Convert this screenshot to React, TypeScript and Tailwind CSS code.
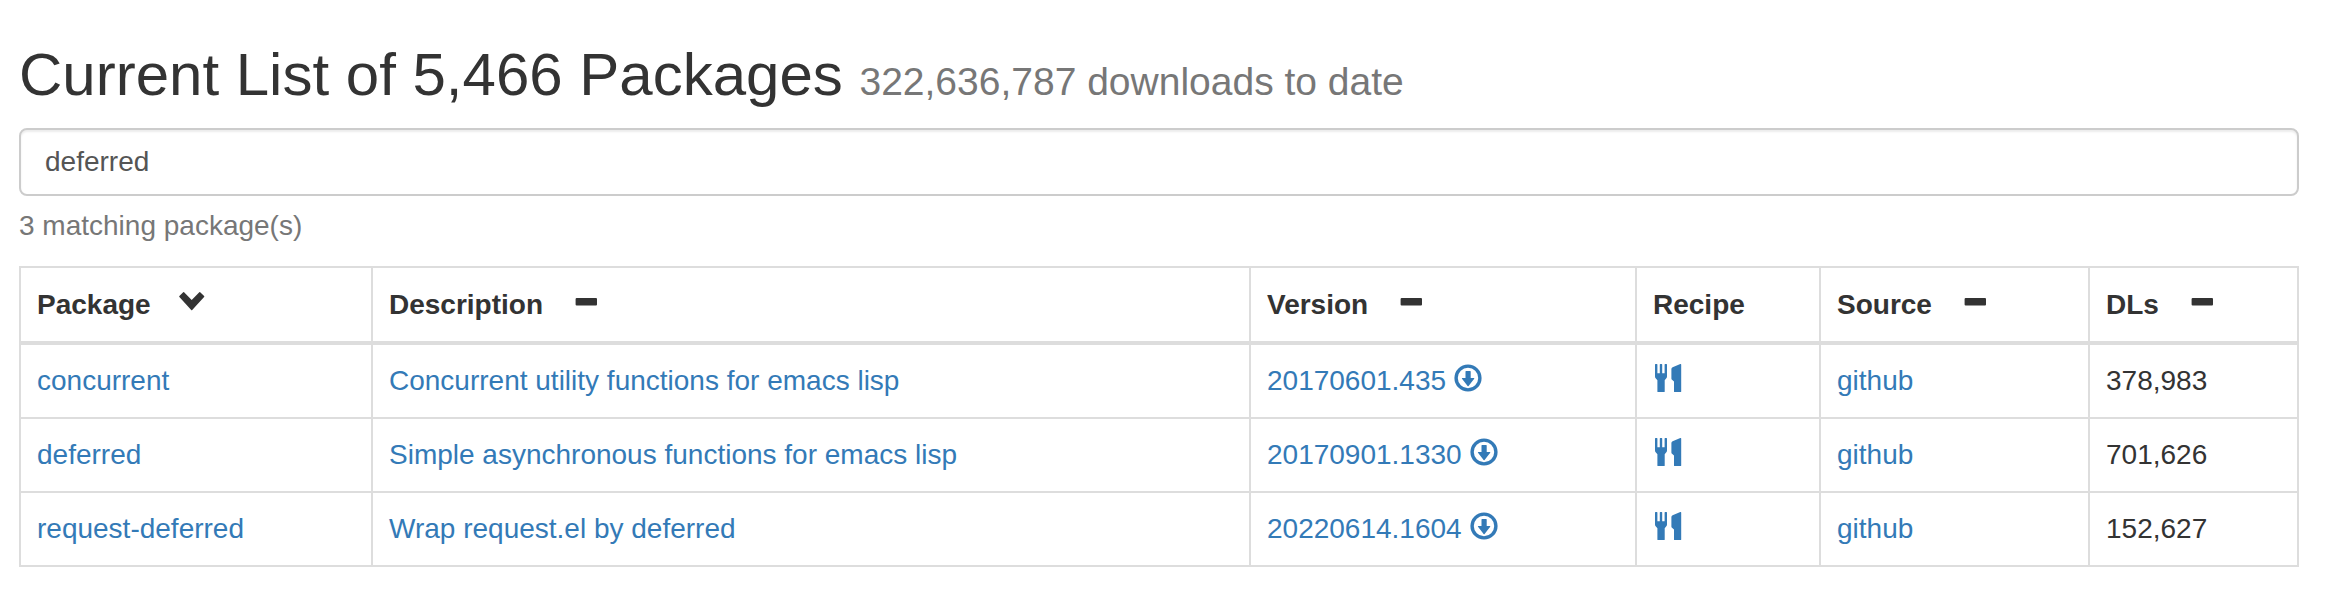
import type { ReactNode } from "react";

type IconProps = { className?: string };

function ChevronDown({ className = "" }: IconProps) {
  return (
    <svg viewBox="0 0 28 28" fill="currentColor" className={`h-7 w-7 ${className}`}>
      <path d="M1.400 9.100 5.200 5.200a.6.6 0 0 1 .9 0L13.700 12.900l7.600-7.700a.6.6 0 0 1 .9 0l3.900 3.900a.6.6 0 0 1 0 .9L14.200 22.900a.7.7 0 0 1-1 0L1.400 10a.6.6 0 0 1 0-.9Z" />
    </svg>
  );
}

function Minus({ className = "" }: IconProps) {
  return (
    <svg viewBox="0 0 28 28" fill="currentColor" className={`h-7 w-7 ${className}`}>
      <rect x="4.6" y="11.1" width="21.4" height="7.5" rx="1" />
    </svg>
  );
}

function Download({ className = "" }: IconProps) {
  return (
    <svg viewBox="0 0 28 28" className={`h-7 w-7 ${className}`}>
      <circle cx="14" cy="14" r="11.9" fill="none" stroke="currentColor" strokeWidth="3.4" />
      <path fill="currentColor" d="M11.900 7h4.400a.4.4 0 0 1 .4.4V14h3.200c.5 0 .6.3.3.7l-5.600 7.200a.6.6 0 0 1-1 0L8 14.700c-.3-.4-.2-.7.3-.7h3.200V7.400a.4.4 0 0 1 .4-.4Z" />
    </svg>
  );
}

function Cutlery({ className = "" }: IconProps) {
  return (
    <svg viewBox="0 0 28 28" fill="currentColor" className={`h-7 w-7 overflow-visible ${className}`}>
      <path d="M2 .6a.6.6 0 0 1 .6-.6h1.200a.6.6 0 0 1 .6.6V9.200h2.400V.6a.6.6 0 0 1 .6-.6h1.200a.6.6 0 0 1 .6.6V9.200h2.400V.6a.6.6 0 0 1 .6-.6h1.200a.6.6 0 0 1 .6.6V12.400c0 .9-.4 1.500-.9 2.100L11.700 16.200V27.400a.6.6 0 0 1-.6.6H5a.6.6 0 0 1-.6-.6V16.200L2.900 14.500C2.400 13.900 2 13.300 2 12.400Z" />
      <path d="M28.200.6V27.400a.6.6 0 0 1-.6.6h-6a.6.6 0 0 1-.6-.6V17.500l-2-1.700a1.600 1.600 0 0 1-.6-1.300V5c0-.8.4-1.400 1.200-1.700L27.300.1c.5-.2.9 0 .9.5Z" />
    </svg>
  );
}

const packages = [
  { name: "concurrent", description: "Concurrent utility functions for emacs lisp", version: "20170601.435", downloads: "378,983" },
  { name: "deferred", description: "Simple asynchronous functions for emacs lisp", version: "20170901.1330", downloads: "701,626" },
  { name: "request-deferred", description: "Wrap request.el by deferred", version: "20220614.1604", downloads: "152,627" },
];

function Th({ children, icon }: { children: ReactNode; icon?: ReactNode }) {
  return (
    <th className="h-[79px] border-t-2 border-b-4 border-l-2 border-[#ddd] px-4 pt-0 pb-4 text-left align-bottom font-bold last:border-r-2">
      <div className="flex h-10 items-center">
        {children}
        {icon}
      </div>
    </th>
  );
}

function Td({ children }: { children: ReactNode }) {
  return (
    <td className="h-[74px] border-b-2 border-l-2 border-[#ddd] px-4 py-0 align-middle last:border-r-2">
      <div className="flex h-10 items-center">{children}</div>
    </td>
  );
}

function Link({ children }: { children: ReactNode }) {
  return (
    <a href="#" className="flex items-center text-[#337ab7]">
      {children}
    </a>
  );
}

export default function App() {
  return (
    <main className="h-[612px] w-[2334px] bg-white pr-[35px] pl-[19px] font-['Liberation_Sans',Arial,sans-serif] text-[28px] leading-10 text-[#333]">
      <h2 className="pt-[42px] text-[60px] leading-[66px] font-medium">
        Current List of 5,466 Packages <small className="text-[39px] leading-none font-normal text-[#777]">322,636,787 downloads to date</small>
      </h2>
      <input
        type="search"
        defaultValue="deferred"
        className="mt-5 block h-[68px] w-full appearance-none rounded-lg border-2 border-[#ccc] bg-white px-6 text-[28px] text-[#555] shadow-[inset_0_2px_2px_rgba(0,0,0,0.075)] outline-none"
      />
      <p className="mt-[10px] text-[#777]">3 matching package(s)</p>
      <table className="mt-5 w-full table-fixed border-separate border-spacing-0">
        <colgroup>
          <col className="w-[352px]" />
          <col className="w-[878px]" />
          <col className="w-[386px]" />
          <col className="w-[184px]" />
          <col className="w-[269px]" />
          <col className="w-[211px]" />
        </colgroup>
        <thead>
          <tr>
            <Th icon={<ChevronDown className="mb-2 ml-[27px]" />}>Package</Th>
            <Th icon={<Minus className="mb-2 ml-7" />}>Description</Th>
            <Th icon={<Minus className="mb-2 ml-7" />}>Version</Th>
            <Th>Recipe</Th>
            <Th icon={<Minus className="mb-2 ml-7" />}>Source</Th>
            <Th icon={<Minus className="mb-2 ml-7" />}>DLs</Th>
          </tr>
        </thead>
        <tbody>
          {packages.map((p) => (
            <tr key={p.name}>
              <Td><Link>{p.name}</Link></Td>
              <Td><Link>{p.description}</Link></Td>
              <Td>
                <Link>
                  {p.version}
                  <Download className="mb-1.5 ml-2" />
                </Link>
              </Td>
              <Td><Link><Cutlery className="mb-1.5" /></Link></Td>
              <Td><Link>github</Link></Td>
              <Td>{p.downloads}</Td>
            </tr>
          ))}
        </tbody>
      </table>
    </main>
  );
}
